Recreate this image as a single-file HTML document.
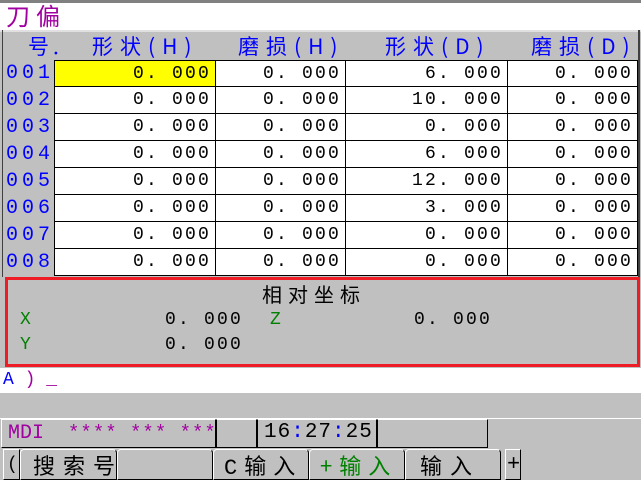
<!DOCTYPE html>
<html><head><meta charset="utf-8"><style>
*{margin:0;padding:0;box-sizing:border-box}
html,body{width:641px;height:480px;overflow:hidden}
body{background:#c0c0c0;position:relative;font-family:"Liberation Mono","Noto Sans CJK SC",monospace}
.a{position:absolute;white-space:pre}
.cjk{font-family:"Noto Sans CJK SC","WenQuanYi Zen Hei",sans-serif}
.num{font-family:"Liberation Mono",monospace;font-size:18px;letter-spacing:2.2px;color:#000}
.cell{position:absolute;background:#fff;border-right:1px solid #000;border-bottom:1px solid #000;text-align:right;padding-right:4px;line-height:26px}
.rn{position:absolute;left:6px;color:#0000ff;font-size:20px;letter-spacing:4px;line-height:26px}
.hd{position:absolute;top:32px;color:#0000ff;font-size:21px;line-height:28px;letter-spacing:7px}
.sk{position:absolute;top:449px;height:31px;border:1px solid #000;border-top-color:#fff;border-left-color:#fff;background:#c0c0c0;font-size:22px;line-height:30px;letter-spacing:8px;white-space:nowrap;overflow:hidden}
</style></head><body>
<div class="a" style="left:0;top:0;width:641px;height:3px;background:#808080"></div>
<div class="a" style="left:0;top:3px;width:641px;height:27px;background:#fff"></div>
<div class="a cjk" style="left:6px;top:1px;color:#a000a0;font-size:24px;letter-spacing:6px;line-height:28px">刀偏</div>
<div class="a" style="left:0;top:30px;width:641px;height:2px;background:#e0e0e0"></div>
<div class="a" style="left:2px;top:30px;width:1px;height:247px;background:#404040"></div>
<div class="a" style="left:638px;top:30px;width:2px;height:247px;background:#404040"></div>

<div class="hd cjk" style="left:28px;letter-spacing:4px">号.</div>
<div class="hd cjk" style="left:92px">形状(H)</div>
<div class="hd cjk" style="left:238px">磨损(H)</div>
<div class="hd cjk" style="left:385px">形状(D)</div>
<div class="hd cjk" style="left:531px">磨损(D)</div>

<div id="t"></div>
<script>
var d=[["0.000","0.000","6.000","0.000"],["0.000","0.000","10.000","0.000"],["0.000","0.000","0.000","0.000"],["0.000","0.000","6.000","0.000"],["0.000","0.000","12.000","0.000"],["0.000","0.000","3.000","0.000"],["0.000","0.000","0.000","0.000"],["0.000","0.000","0.000","0.000"]];
var cx=[[54,216],[216,346],[346,508],[508,638]],h="";
for(var i=0;i<8;i++){var y=60+i*27;h+='<div class="rn" style="top:'+(y+1)+'px">00'+(i+1)+'</div>';
for(var j=0;j<4;j++){var v=d[i][j].replace(".",". ");h+='<div class="cell num" style="left:'+cx[j][0]+'px;top:'+y+'px;width:'+(cx[j][1]-cx[j][0])+'px;height:27px;'+(i==0&&j==0?'background:#ffff00;':'')+(i==0?'border-top:1px solid #000;':'')+(j==0?'border-left:1px solid #000;':'')+'">'+v+'</div>';}}
document.getElementById("t").innerHTML=h;
</script>

<div class="a" style="left:5px;top:277px;width:635px;height:90px;border:3px solid #ee1c24"></div>
<div class="a cjk" style="left:262px;top:281px;font-size:20px;letter-spacing:6px;line-height:26px">相对坐标</div>
<div class="a" style="left:20px;top:309px;color:#008000;font-size:18px;line-height:22px">X</div>
<div class="a num" style="left:165px;top:309px;line-height:22px">0. 000</div>
<div class="a" style="left:270px;top:309px;color:#008000;font-size:18px;line-height:22px">Z</div>
<div class="a num" style="left:414px;top:309px;line-height:22px">0. 000</div>
<div class="a" style="left:20px;top:334px;color:#008000;font-size:18px;line-height:22px">Y</div>
<div class="a num" style="left:165px;top:334px;line-height:22px">0. 000</div>

<div class="a" style="left:0;top:368px;width:641px;height:25px;background:#fff"></div>
<div class="a" style="left:3px;top:369px;font-size:18px;line-height:22px"><span style="color:#0000ff">A</span><span style="color:#a000a0"> ) _</span></div>

<div class="a" style="left:0;top:418px;width:641px;height:1px;background:#fff"></div>
<div class="a" style="left:1px;top:419px;width:215px;height:29px;border:1px solid #000;border-top-color:#fff;border-left-color:#fff"></div>
<div class="a" style="left:8px;top:420px;color:#a000a0;font-size:20px;line-height:26px">MDI  <span style="font-size:19px;letter-spacing:1px">**** *** ***</span></div>
<div class="a" style="left:216px;top:419px;width:41px;height:29px;border:1px solid #000;border-top-color:#fff"></div>
<div class="a" style="left:257px;top:419px;width:120px;height:29px;border:1px solid #000;border-top-color:#fff"></div>
<div class="a" style="left:264px;top:420px;font-size:21px;line-height:26px;letter-spacing:1px">16<span style="color:#0000ff">:</span>27<span style="color:#0000ff">:</span>25</div>
<div class="a" style="left:377px;top:419px;width:111px;height:29px;border:1px solid #000;border-top-color:#fff"></div>

<div class="sk" style="left:3px;width:17px;letter-spacing:0;font-size:18px;padding-left:3px">(</div>
<div class="sk cjk" style="left:20px;width:97px;padding-left:12px;border-radius:4px 4px 0 0">搜索号</div>
<div class="sk" style="left:117px;width:96px;border-radius:4px 4px 0 0"></div>
<div class="sk cjk" style="left:213px;width:96px;padding-left:10px;letter-spacing:7px;border-radius:4px 4px 0 0"><span style="font-family:'Liberation Mono'">C</span>输入</div>
<div class="sk cjk" style="left:309px;width:96px;padding-left:10px;color:#008000;letter-spacing:7px;border-radius:4px 4px 0 0">+输入</div>
<div class="sk cjk" style="left:405px;width:96px;padding-left:14px;border-radius:4px 4px 0 0">输入</div>
<div class="sk" style="left:505px;width:16px;letter-spacing:0;padding-left:1px">+</div>
</body></html>
